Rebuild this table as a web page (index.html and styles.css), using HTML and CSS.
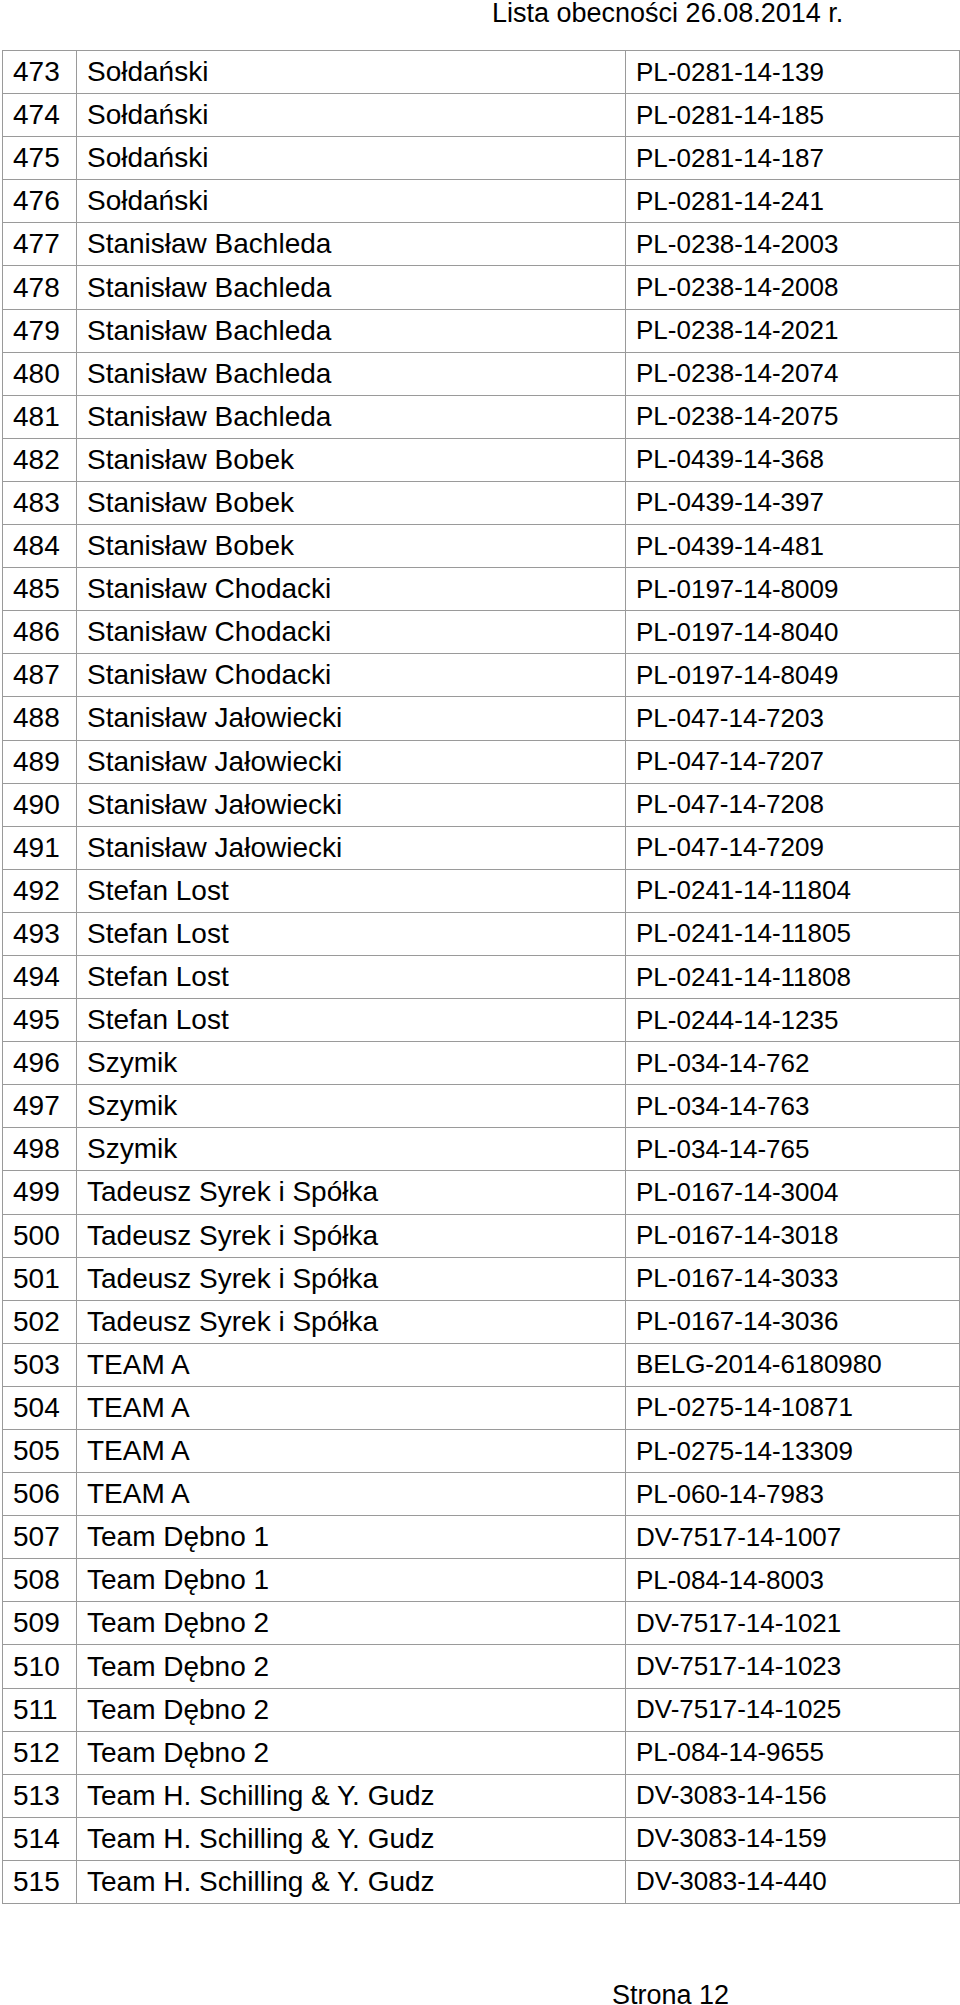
FILE: index.html
```html
<!DOCTYPE html>
<html lang="pl">
<head>
<meta charset="utf-8">
<title>Lista obecności 26.08.2014 r.</title>
<link rel="stylesheet" href="styles.css">
</head>
<body>
<header class="page-head">Lista obecności 26.08.2014 r.</header>
<table class="list">
<colgroup><col class="c-num"><col class="c-name"><col class="c-code"></colgroup>
<tbody>
<tr><td class="num">473</td><td class="name">Sołdański</td><td class="code">PL-0281-14-139</td></tr>
<tr><td class="num">474</td><td class="name">Sołdański</td><td class="code">PL-0281-14-185</td></tr>
<tr><td class="num">475</td><td class="name">Sołdański</td><td class="code">PL-0281-14-187</td></tr>
<tr><td class="num">476</td><td class="name">Sołdański</td><td class="code">PL-0281-14-241</td></tr>
<tr><td class="num">477</td><td class="name">Stanisław Bachleda</td><td class="code">PL-0238-14-2003</td></tr>
<tr><td class="num">478</td><td class="name">Stanisław Bachleda</td><td class="code">PL-0238-14-2008</td></tr>
<tr><td class="num">479</td><td class="name">Stanisław Bachleda</td><td class="code">PL-0238-14-2021</td></tr>
<tr><td class="num">480</td><td class="name">Stanisław Bachleda</td><td class="code">PL-0238-14-2074</td></tr>
<tr><td class="num">481</td><td class="name">Stanisław Bachleda</td><td class="code">PL-0238-14-2075</td></tr>
<tr><td class="num">482</td><td class="name">Stanisław Bobek</td><td class="code">PL-0439-14-368</td></tr>
<tr><td class="num">483</td><td class="name">Stanisław Bobek</td><td class="code">PL-0439-14-397</td></tr>
<tr><td class="num">484</td><td class="name">Stanisław Bobek</td><td class="code">PL-0439-14-481</td></tr>
<tr><td class="num">485</td><td class="name">Stanisław Chodacki</td><td class="code">PL-0197-14-8009</td></tr>
<tr><td class="num">486</td><td class="name">Stanisław Chodacki</td><td class="code">PL-0197-14-8040</td></tr>
<tr><td class="num">487</td><td class="name">Stanisław Chodacki</td><td class="code">PL-0197-14-8049</td></tr>
<tr><td class="num">488</td><td class="name">Stanisław Jałowiecki</td><td class="code">PL-047-14-7203</td></tr>
<tr><td class="num">489</td><td class="name">Stanisław Jałowiecki</td><td class="code">PL-047-14-7207</td></tr>
<tr><td class="num">490</td><td class="name">Stanisław Jałowiecki</td><td class="code">PL-047-14-7208</td></tr>
<tr><td class="num">491</td><td class="name">Stanisław Jałowiecki</td><td class="code">PL-047-14-7209</td></tr>
<tr><td class="num">492</td><td class="name">Stefan Lost</td><td class="code">PL-0241-14-11804</td></tr>
<tr><td class="num">493</td><td class="name">Stefan Lost</td><td class="code">PL-0241-14-11805</td></tr>
<tr><td class="num">494</td><td class="name">Stefan Lost</td><td class="code">PL-0241-14-11808</td></tr>
<tr><td class="num">495</td><td class="name">Stefan Lost</td><td class="code">PL-0244-14-1235</td></tr>
<tr><td class="num">496</td><td class="name">Szymik</td><td class="code">PL-034-14-762</td></tr>
<tr><td class="num">497</td><td class="name">Szymik</td><td class="code">PL-034-14-763</td></tr>
<tr><td class="num">498</td><td class="name">Szymik</td><td class="code">PL-034-14-765</td></tr>
<tr><td class="num">499</td><td class="name">Tadeusz Syrek i Spółka</td><td class="code">PL-0167-14-3004</td></tr>
<tr><td class="num">500</td><td class="name">Tadeusz Syrek i Spółka</td><td class="code">PL-0167-14-3018</td></tr>
<tr><td class="num">501</td><td class="name">Tadeusz Syrek i Spółka</td><td class="code">PL-0167-14-3033</td></tr>
<tr><td class="num">502</td><td class="name">Tadeusz Syrek i Spółka</td><td class="code">PL-0167-14-3036</td></tr>
<tr><td class="num">503</td><td class="name">TEAM A</td><td class="code">BELG-2014-6180980</td></tr>
<tr><td class="num">504</td><td class="name">TEAM A</td><td class="code">PL-0275-14-10871</td></tr>
<tr><td class="num">505</td><td class="name">TEAM A</td><td class="code">PL-0275-14-13309</td></tr>
<tr><td class="num">506</td><td class="name">TEAM A</td><td class="code">PL-060-14-7983</td></tr>
<tr><td class="num">507</td><td class="name">Team Dębno 1</td><td class="code">DV-7517-14-1007</td></tr>
<tr><td class="num">508</td><td class="name">Team Dębno 1</td><td class="code">PL-084-14-8003</td></tr>
<tr><td class="num">509</td><td class="name">Team Dębno 2</td><td class="code">DV-7517-14-1021</td></tr>
<tr><td class="num">510</td><td class="name">Team Dębno 2</td><td class="code">DV-7517-14-1023</td></tr>
<tr><td class="num">511</td><td class="name">Team Dębno 2</td><td class="code">DV-7517-14-1025</td></tr>
<tr><td class="num">512</td><td class="name">Team Dębno 2</td><td class="code">PL-084-14-9655</td></tr>
<tr><td class="num">513</td><td class="name">Team H. Schilling &amp; Y. Gudz</td><td class="code">DV-3083-14-156</td></tr>
<tr><td class="num">514</td><td class="name">Team H. Schilling &amp; Y. Gudz</td><td class="code">DV-3083-14-159</td></tr>
<tr><td class="num">515</td><td class="name">Team H. Schilling &amp; Y. Gudz</td><td class="code">DV-3083-14-440</td></tr>
</tbody>
</table>
<footer class="page-foot">Strona 12</footer>
</body>
</html>
```

FILE: styles.css
```css
html, body {
  margin: 0;
  padding: 0;
  background: #ffffff;
}

body {
  width: 960px;
  color: #000000;
  font-family: "Liberation Sans", Arial, sans-serif;
}

.page-head {
  display: block;
  padding-left: 492px;
  font-size: 27px;
  line-height: 27px;
  height: 27px;
  white-space: nowrap;
}

.list {
  margin: 23px 0 0 2px;
  width: 957px;
  table-layout: fixed;
  border-collapse: collapse;
  border: 1px solid #9a9a9a;
}

.c-num { width: 74px; }
.c-name { width: 549px; }
.c-code { width: 334px; }

.list tr {
  height: 43.1px;
}

.list td {
  border: 1px solid #9a9a9a;
  padding: 0 0 0 10px;
  vertical-align: middle;
  white-space: nowrap;
  overflow: hidden;
}

.num,
.name {
  font-size: 28px;
}

.code {
  font-size: 26px;
}

.page-foot {
  display: block;
  margin-top: 78px;
  padding-left: 612px;
  font-size: 27px;
  line-height: 27px;
  white-space: nowrap;
}
```
